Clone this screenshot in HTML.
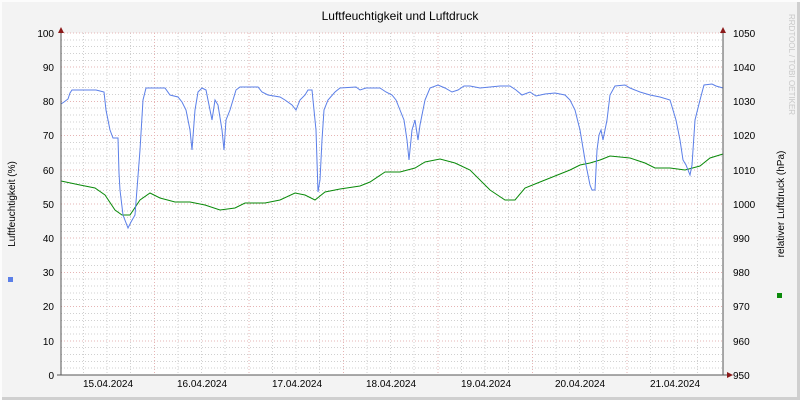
<!DOCTYPE html>
<html><head><meta charset="utf-8"><style>
html,body{margin:0;padding:0;background:#f3f3f3}
svg{display:block}
text{font-family:"Liberation Sans",sans-serif;font-size:10px;fill:#000}
</style></head><body>
<svg width="800" height="400" viewBox="0 0 800 400" xmlns="http://www.w3.org/2000/svg">
<rect x="0" y="0" width="800" height="400" fill="#f3f3f3"/>
<rect x="797" y="0" width="3" height="400" fill="#cfcfcf"/>
<rect x="0" y="397" width="800" height="3" fill="#cfcfcf"/>
<rect x="0" y="0" width="800" height="2" fill="#fcfcfc"/>
<rect x="0" y="0" width="2" height="400" fill="#fcfcfc"/>
<rect x="61" y="33" width="662" height="342" fill="#fff"/>
<g stroke-width="1" fill="none" shape-rendering="crispEdges">
<g stroke="#d0d0d0" stroke-dasharray="1,2">
<path d="M61 368.2H723M61 361.3H723M61 354.5H723M61 347.6H723M61 334H723M61 327.1H723M61 320.3H723M61 313.4H723M61 299.7H723M61 292.9H723M61 286H723M61 279.2H723M61 265.6H723M61 258.7H723M61 251.9H723M61 245H723M61 231.4H723M61 224.5H723M61 217.7H723M61 210.8H723M61 197.2H723M61 190.3H723M61 183.5H723M61 176.6H723M61 162.9H723M61 156.1H723M61 149.2H723M61 142.4H723M61 128.8H723M61 121.9H723M61 115.1H723M61 108.2H723M61 94.6H723M61 87.7H723M61 80.9H723M61 74H723M61 60.4H723M61 53.5H723M61 46.7H723M61 39.8H723"/>
<path d="M83.5 33V375M107 33V375M130.5 33V375M178 33V375M201.5 33V375M225 33V375M272.5 33V375M296 33V375M319.5 33V375M367 33V375M390.5 33V375M414 33V375M461.5 33V375M485 33V375M508.5 33V375M556 33V375M579.5 33V375M603 33V375M650.5 33V375M674 33V375M697.5 33V375"/>
</g>
<g stroke="#e6b4b4" stroke-dasharray="1,2">
<path d="M61 340.8H723M61 306.6H723M61 272.4H723M61 238.2H723M61 204H723M61 169.8H723M61 135.6H723M61 101.4H723M61 67.2H723M61 33H723"/>
<path d="M154.5 33V375M249 33V375M343.5 33V375M438 33V375M532.5 33V375M627 33V375"/>
</g>
</g>
<polyline fill="none" stroke="#0a8a0a" stroke-width="1" points="61,181 80,185 95,188 105,195 115,210 122,215 130,215 140,200 150,193 160,198 175,202 190,202 205,205 220,210 235,208 245,203 265,203 280,200 295,193 305,195 315,200 325,192 340,189 360,186 370,182 385,172 400,172 415,168 425,162 440,159 455,163 470,170 490,190 505,200 515,200 525,188 540,182 555,176 570,170 580,165 590,163 600,160 610,156 630,158 645,163 655,168 670,168 685,170 700,166 710,158 723,154"/>
<polyline fill="none" stroke="#5b7fe8" stroke-width="1" points="61,104 64,102 68,99 70,93 72,90 96,90 100,91 104,92 106,110 110,130 113,138 118,138 119,173 120,190 123,215 128,228 131,222 135,215 140,150 143,100 146,88 165,88 170,95 178,97 182,102 186,110 190,130 192,150 195,110 198,92 202,88 206,90 208,100 210,110 212,120 215,100 218,105 222,130 224,150 226,120 230,110 233,100 236,90 240,87 258,87 262,92 268,95 280,97 285,100 292,105 296,110 300,100 305,95 308,90 312,90 316,130 318,192 320,180 322,140 324,110 328,100 335,92 340,88 356,87 360,90 366,88 380,88 386,92 392,95 396,100 400,110 404,120 407,140 409,160 412,130 415,120 418,140 420,125 425,100 430,88 438,85 445,88 452,92 458,90 464,86 470,86 480,88 490,87 500,86 510,86 516,90 522,95 530,92 536,96 545,94 555,93 565,95 570,100 575,110 580,130 585,160 590,185 592,190 595,190 597,150 599,135 601,130 603,140 605,130 607,120 610,95 615,86 625,85 630,88 640,92 650,95 660,97 670,100 676,120 680,140 683,160 686,165 690,175 692,165 695,120 700,100 704,85 712,84 716,86 723,88"/>
<path d="M61 29V375M723 29V375M57 375H727" stroke="#555" stroke-width="1" fill="none" shape-rendering="crispEdges"/>
<path d="M58 33L61 27L64 33Z M720 33L723 27L726 33Z M727 372L733 375L727 378Z" fill="#8b1a1a"/>
<g text-anchor="end">
<text x="54" y="37">100</text><text x="54" y="71">90</text><text x="54" y="105">80</text><text x="54" y="139">70</text><text x="54" y="174">60</text><text x="54" y="208">50</text><text x="54" y="242">40</text><text x="54" y="276">30</text><text x="54" y="310">20</text><text x="54" y="345">10</text><text x="54" y="379">0</text>
</g>
<g>
<text x="733" y="37">1050</text><text x="733" y="71">1040</text><text x="733" y="105">1030</text><text x="733" y="139">1020</text><text x="733" y="174">1010</text><text x="733" y="208">1000</text><text x="733" y="242">990</text><text x="733" y="276">980</text><text x="733" y="310">970</text><text x="733" y="345">960</text><text x="733" y="379">950</text>
</g>
<g text-anchor="middle">
<text x="108" y="387">15.04.2024</text><text x="202" y="387">16.04.2024</text><text x="297" y="387">17.04.2024</text><text x="391" y="387">18.04.2024</text><text x="486" y="387">19.04.2024</text><text x="580" y="387">20.04.2024</text><text x="675" y="387">21.04.2024</text>
</g>
<text x="400" y="20" text-anchor="middle" style="font-size:12px">Luftfeuchtigkeit und Luftdruck</text>
<text transform="translate(15,204) rotate(-90)" text-anchor="middle">Luftfeuchtigkeit (%)</text>
<text transform="translate(784,204) rotate(-90)" text-anchor="middle">relativer Luftdruck (hPa)</text>
<text transform="translate(789,14) rotate(90)" style="font-size:8px;fill:#c8c8c8">RRDTOOL / TOBI OETIKER</text>
<rect x="8" y="277" width="5" height="5" fill="#5b7fe8"/>
<rect x="777" y="293" width="5" height="5" fill="#0a8a0a"/>
</svg>
</body></html>
